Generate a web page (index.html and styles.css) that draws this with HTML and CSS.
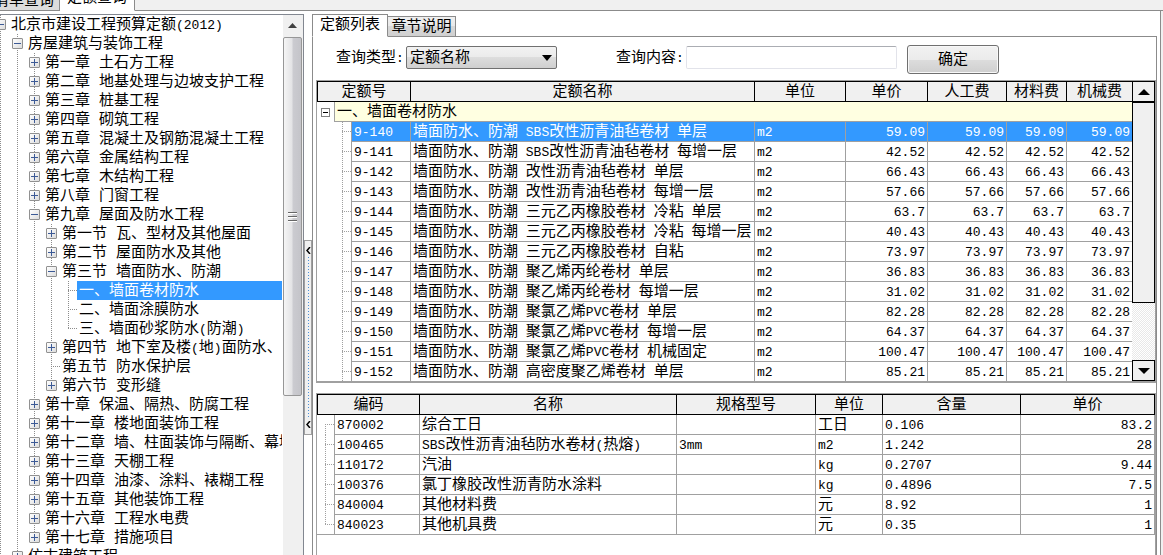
FILE: index.html
```html
<!DOCTYPE html>
<html lang="zh-CN">
<head>
<meta charset="utf-8">
<title>定额查询</title>
<link rel="stylesheet" href="styles.css">
</head>
<body>
<nav class="top-tabs">
  <button class="top-tab">清单查询</button>
  <button class="top-tab current">定额查询</button>
  <span class="top-fill"></span>
</nav>
<main class="page">
  <aside class="tree-pane">
    <div class="tree-view">
      <ul class="tree root">
        <li><div class="row"><button class="toggle open" aria-label="收起"></button><span class="label">北京市建设工程预算定额<span class="en">(2012)</span></span></div>
          <ul class="tree more">
            <li><div class="row"><button class="toggle open" aria-label="收起"></button><span class="label">房屋建筑与装饰工程</span></div>
              <ul class="tree">
                <li><div class="row"><button class="toggle" aria-label="展开"></button><span class="label">第一章 土石方工程</span></div></li>
                <li><div class="row"><button class="toggle" aria-label="展开"></button><span class="label">第二章 地基处理与边坡支护工程</span></div></li>
                <li><div class="row"><button class="toggle" aria-label="展开"></button><span class="label">第三章 桩基工程</span></div></li>
                <li><div class="row"><button class="toggle" aria-label="展开"></button><span class="label">第四章 砌筑工程</span></div></li>
                <li><div class="row"><button class="toggle" aria-label="展开"></button><span class="label">第五章 混凝土及钢筋混凝土工程</span></div></li>
                <li><div class="row"><button class="toggle" aria-label="展开"></button><span class="label">第六章 金属结构工程</span></div></li>
                <li><div class="row"><button class="toggle" aria-label="展开"></button><span class="label">第七章 木结构工程</span></div></li>
                <li><div class="row"><button class="toggle" aria-label="展开"></button><span class="label">第八章 门窗工程</span></div></li>
                <li><div class="row"><button class="toggle open" aria-label="收起"></button><span class="label">第九章 屋面及防水工程</span></div>
                  <ul class="tree">
                    <li><div class="row"><button class="toggle" aria-label="展开"></button><span class="label">第一节 瓦、型材及其他屋面</span></div></li>
                    <li><div class="row"><button class="toggle" aria-label="展开"></button><span class="label">第二节 屋面防水及其他</span></div></li>
                    <li><div class="row"><button class="toggle open" aria-label="收起"></button><span class="label">第三节 墙面防水、防潮</span></div>
                      <ul class="tree">
                        <li><div class="row"><span class="leaf"></span><span class="label selected">一、墙面卷材防水</span></div></li>
                        <li><div class="row"><span class="leaf"></span><span class="label">二、墙面涂膜防水</span></div></li>
                        <li><div class="row"><span class="leaf"></span><span class="label">三、墙面砂浆防水<span class="en">(</span>防潮<span class="en">)</span></span></div></li>
                      </ul>
                    </li>
                    <li><div class="row"><button class="toggle" aria-label="展开"></button><span class="label">第四节 地下室及楼<span class="en">(</span>地<span class="en">)</span>面防水、</span></div></li>
                    <li><div class="row"><span class="leaf"></span><span class="label">第五节 防水保护层</span></div></li>
                    <li><div class="row"><button class="toggle" aria-label="展开"></button><span class="label">第六节 变形缝</span></div></li>
                  </ul>
                </li>
                <li><div class="row"><button class="toggle" aria-label="展开"></button><span class="label">第十章 保温、隔热、防腐工程</span></div></li>
                <li><div class="row"><button class="toggle" aria-label="展开"></button><span class="label">第十一章 楼地面装饰工程</span></div></li>
                <li><div class="row"><button class="toggle" aria-label="展开"></button><span class="label">第十二章 墙、柱面装饰与隔断、幕墙</span></div></li>
                <li><div class="row"><button class="toggle" aria-label="展开"></button><span class="label">第十三章 天棚工程</span></div></li>
                <li><div class="row"><button class="toggle" aria-label="展开"></button><span class="label">第十四章 油漆、涂料、裱糊工程</span></div></li>
                <li><div class="row"><button class="toggle" aria-label="展开"></button><span class="label">第十五章 其他装饰工程</span></div></li>
                <li><div class="row"><button class="toggle" aria-label="展开"></button><span class="label">第十六章 工程水电费</span></div></li>
                <li><div class="row"><button class="toggle" aria-label="展开"></button><span class="label">第十七章 措施项目</span></div></li>
              </ul>
            </li>
            <li><div class="row"><button class="toggle" aria-label="展开"></button><span class="label">仿古建筑工程</span></div></li>
          </ul>
        </li>
      </ul>
    </div>
    <div class="tree-scroll">
      <svg class="scroll-up" width="19" height="22" viewBox="0 0 19 22"><path d="M5 13l4.500-5 4.500 5z" fill="#404040"/></svg>
      <div class="tree-thumb"><svg width="9" height="11" viewBox="0 0 9 11"><path d="M0 1.500h9M0 5.500h9M0 9.500h9" stroke="#666"/><path d="M0 2.500h9M0 6.500h9M0 10.500h9" stroke="#fff"/></svg></div>
    </div>
  </aside>

  <div class="splitter"><button class="grip" aria-label="收起左侧">
    <svg width="5" height="7" viewBox="0 0 5 7"><path d="M4 0L1 3.500 4 7" fill="none" stroke="#000" stroke-width="1.500"/></svg>
    <span class="dots"></span>
    <svg width="5" height="7" viewBox="0 0 5 7"><path d="M4 0L1 3.500 4 7" fill="none" stroke="#000" stroke-width="1.500"/></svg>
  </button></div>

  <section class="content">
    <nav class="tabs">
      <button class="tab current">定额列表</button>
      <button class="tab">章节说明</button>
      <span class="tab-fill"></span>
    </nav>
    <div class="panel">
      <form class="query">
        <label for="kind">查询类型<span class="en">:</span></label>
        <span class="select-box"><select id="kind"><option>定额名称</option></select><svg width="10" height="6" viewBox="0 0 10 6"><path d="M0 0h10L5 6z"/></svg></span>
        <label class="second" for="text">查询内容<span class="en">:</span></label>
        <input id="text" type="text">
        <button class="ok" type="button">确定</button>
      </form>

      <div class="grid-box quota">
        <table class="grid">
          <colgroup><col class="w18"><col class="w17"><col class="w59"><col><col class="w91"><col class="w82"><col class="w79"><col class="w60"><col class="w65"></colgroup>
          <thead><tr><th colspan="3">定额号</th><th>定额名称</th><th>单位</th><th>单价</th><th>人工费</th><th>材料费</th><th>机械费</th></tr></thead>
          <tbody>
            <tr class="group"><td class="gutter"><button class="mini" aria-label="收起"></button></td><td colspan="8">一、墙面卷材防水</td></tr>
            <tr class="picked"><td class="branch" colspan="2"></td><td class="en">9-140</td><td>墙面防水、防潮<span class="en"> SBS</span>改性沥青油毡卷材<span class="en"> </span>单层</td><td class="en">m2</td><td class="num">59.09</td><td class="num">59.09</td><td class="num">59.09</td><td class="num">59.09</td></tr>
            <tr><td class="branch" colspan="2"></td><td class="en">9-141</td><td>墙面防水、防潮<span class="en"> SBS</span>改性沥青油毡卷材<span class="en"> </span>每增一层</td><td class="en">m2</td><td class="num">42.52</td><td class="num">42.52</td><td class="num">42.52</td><td class="num">42.52</td></tr>
            <tr><td class="branch" colspan="2"></td><td class="en">9-142</td><td>墙面防水、防潮<span class="en"> </span>改性沥青油毡卷材<span class="en"> </span>单层</td><td class="en">m2</td><td class="num">66.43</td><td class="num">66.43</td><td class="num">66.43</td><td class="num">66.43</td></tr>
            <tr><td class="branch" colspan="2"></td><td class="en">9-143</td><td>墙面防水、防潮<span class="en"> </span>改性沥青油毡卷材<span class="en"> </span>每增一层</td><td class="en">m2</td><td class="num">57.66</td><td class="num">57.66</td><td class="num">57.66</td><td class="num">57.66</td></tr>
            <tr><td class="branch" colspan="2"></td><td class="en">9-144</td><td>墙面防水、防潮<span class="en"> </span>三元乙丙橡胶卷材<span class="en"> </span>冷粘<span class="en"> </span>单层</td><td class="en">m2</td><td class="num">63.7</td><td class="num">63.7</td><td class="num">63.7</td><td class="num">63.7</td></tr>
            <tr><td class="branch" colspan="2"></td><td class="en">9-145</td><td>墙面防水、防潮<span class="en"> </span>三元乙丙橡胶卷材<span class="en"> </span>冷粘<span class="en"> </span>每增一层</td><td class="en">m2</td><td class="num">40.43</td><td class="num">40.43</td><td class="num">40.43</td><td class="num">40.43</td></tr>
            <tr><td class="branch" colspan="2"></td><td class="en">9-146</td><td>墙面防水、防潮<span class="en"> </span>三元乙丙橡胶卷材<span class="en"> </span>自粘</td><td class="en">m2</td><td class="num">73.97</td><td class="num">73.97</td><td class="num">73.97</td><td class="num">73.97</td></tr>
            <tr><td class="branch" colspan="2"></td><td class="en">9-147</td><td>墙面防水、防潮<span class="en"> </span>聚乙烯丙纶卷材<span class="en"> </span>单层</td><td class="en">m2</td><td class="num">36.83</td><td class="num">36.83</td><td class="num">36.83</td><td class="num">36.83</td></tr>
            <tr><td class="branch" colspan="2"></td><td class="en">9-148</td><td>墙面防水、防潮<span class="en"> </span>聚乙烯丙纶卷材<span class="en"> </span>每增一层</td><td class="en">m2</td><td class="num">31.02</td><td class="num">31.02</td><td class="num">31.02</td><td class="num">31.02</td></tr>
            <tr><td class="branch" colspan="2"></td><td class="en">9-149</td><td>墙面防水、防潮<span class="en"> </span>聚氯乙烯<span class="en">PVC</span>卷材<span class="en"> </span>单层</td><td class="en">m2</td><td class="num">82.28</td><td class="num">82.28</td><td class="num">82.28</td><td class="num">82.28</td></tr>
            <tr><td class="branch" colspan="2"></td><td class="en">9-150</td><td>墙面防水、防潮<span class="en"> </span>聚氯乙烯<span class="en">PVC</span>卷材<span class="en"> </span>每增一层</td><td class="en">m2</td><td class="num">64.37</td><td class="num">64.37</td><td class="num">64.37</td><td class="num">64.37</td></tr>
            <tr><td class="branch" colspan="2"></td><td class="en">9-151</td><td>墙面防水、防潮<span class="en"> </span>聚氯乙烯<span class="en">PVC</span>卷材<span class="en"> </span>机械固定</td><td class="en">m2</td><td class="num">100.47</td><td class="num">100.47</td><td class="num">100.47</td><td class="num">100.47</td></tr>
            <tr><td class="branch" colspan="2"></td><td class="en">9-152</td><td>墙面防水、防潮<span class="en"> </span>高密度聚乙烯卷材<span class="en"> </span>单层</td><td class="en">m2</td><td class="num">85.21</td><td class="num">85.21</td><td class="num">85.21</td><td class="num">85.21</td></tr>
          </tbody>
        </table>
        <div class="grid-scroll">
          <button class="arrow" aria-label="向上"><svg width="12" height="6" viewBox="0 0 12 6"><path d="M0 6L6 0l6 6z"/></svg></button>
          <div class="thumb"></div>
          <div class="track"></div>
          <button class="arrow" aria-label="向下"><svg width="12" height="6" viewBox="0 0 12 6"><path d="M0 0h12L6 6z"/></svg></button>
        </div>
      </div>

      <div class="grid-box detail">
        <table class="grid">
          <colgroup><col class="w18"><col class="w85"><col><col class="w139"><col class="w67"><col class="w138"><col class="w134"></colgroup>
          <thead><tr><th colspan="2">编码</th><th>名称</th><th>规格型号</th><th>单位</th><th>含量</th><th>单价</th></tr></thead>
          <tbody>
            <tr><td class="link first"></td><td class="en">870002</td><td>综合工日</td><td></td><td>工日</td><td class="en">0.106</td><td class="num">83.2</td></tr>
            <tr><td class="link"></td><td class="en">100465</td><td><span class="en">SBS</span>改性沥青油毡防水卷材<span class="en">(</span>热熔<span class="en">)</span></td><td class="en">3mm</td><td class="en">m2</td><td class="en">1.242</td><td class="num">28</td></tr>
            <tr><td class="link"></td><td class="en">110172</td><td>汽油</td><td></td><td class="en">kg</td><td class="en">0.2707</td><td class="num">9.44</td></tr>
            <tr><td class="link"></td><td class="en">100376</td><td>氯丁橡胶改性沥青防水涂料</td><td></td><td class="en">kg</td><td class="en">0.4896</td><td class="num">7.5</td></tr>
            <tr><td class="link"></td><td class="en">840004</td><td>其他材料费</td><td></td><td>元</td><td class="en">8.92</td><td class="num">1</td></tr>
            <tr><td class="link last"></td><td class="en">840023</td><td>其他机具费</td><td></td><td>元</td><td class="en">0.35</td><td class="num">1</td></tr>
          </tbody>
        </table>
      </div>
    </div>
  </section>
</main>
</body>
</html>
```

FILE: styles.css
```css
* { box-sizing: border-box; }
body {
  margin: 0;
  height: 100vh;
  overflow: hidden;
  display: flex;
  flex-direction: column;
  background: #f0f0f0;
  color: #000;
  font: 15px/19px "Liberation Mono", "Noto Sans CJK SC", monospace;
}
button, select, input { font: inherit; color: inherit; margin: 0; padding: 0; border-radius: 0; }
svg { display: block; flex: none; }
.en, .num { font-size: 13px; white-space: pre; }

/* outer tabs */
.top-tabs { display: flex; align-items: flex-end; height: 11px; flex: none; overflow: hidden; }
.top-tab {
  width: 75px; height: 24px; flex: none;
  border: 1px solid #8b8b8b; border-top: 0; border-left: 0;
  background: #dcdcdc; line-height: 15px; padding-top: 5px;
}
.top-tab:first-child { margin-left: -15px; padding-left: 4px; }
.top-tab.current { background: #fff; border-bottom-color: #fff; padding-top: 0; }
.top-fill { flex: 1; height: 1px; background: #8b8b8b; }

.page {
  flex: 1; min-height: 0; display: flex;
  margin-right: 2px; padding: 3px 3px 0 0;
  background: #fff; border-right: 1px solid #8b8b8b;
}

/* tree */
.tree-pane {
  width: 304px; flex: none; display: flex; overflow: hidden;
  border-top: 1px solid #828790; border-right: 1px solid #828790;
}
.tree-view { flex: 1; min-width: 0; overflow: hidden; }
.tree {
  list-style: none; margin: 0 0 0 17px; padding: 0;
  background: repeating-linear-gradient(#8c8c8c 0 1px, transparent 1px 2px) 8px 0 / 1px calc(100% - 9px) no-repeat;
}
.tree.root { margin-left: -8px; background-size: 1px 100%; }
.tree.more { background-size: 1px 100%; }
.row { display: flex; height: 19px; }
.label { flex: 1; min-width: 0; padding-left: 2px; line-height: 21px; margin-right: 1px; white-space: nowrap; overflow: hidden; }
.label.selected { background: #3399ff; color: #fff; }
.toggle {
  width: 11px; height: 11px; flex: none; margin: 4px 3px;
  border: 1px solid #919191; border-radius: 1px;
  background:
    linear-gradient(#3c5a96, #3c5a96) center / 7px 1px no-repeat,
    linear-gradient(#3c5a96, #3c5a96) center / 1px 7px no-repeat,
    linear-gradient(135deg, #fff, #dcdcdc);
}
.toggle.open {
  background:
    linear-gradient(#3c5a96, #3c5a96) center / 7px 1px no-repeat,
    linear-gradient(135deg, #fff, #dcdcdc);
}
.leaf {
  width: 17px; flex: none;
  background: repeating-linear-gradient(90deg, #8c8c8c 0 1px, transparent 1px 2px) 8px 9px / 9px 1px no-repeat;
}
.tree-scroll { width: 20px; flex: none; background: #f0f0f0; padding-right: 1px; }
.tree-thumb {
  height: 359px; display: flex; align-items: center; justify-content: center;
  border: 1px solid #979797; border-radius: 2px;
  background: linear-gradient(90deg, #f5f5f5, #e4e4e6 45%, #cbcbd0 55%, #c4c4c9);
}

/* splitter */
.splitter { width: 8px; flex: none; padding-top: 226px; }
.grip {
  width: 8px; height: 195px; padding: 6px 0;
  display: flex; flex-direction: column; align-items: center; gap: 3px;
  border: 1px solid #a0a0a0; background: #f0f0f0;
}
.dots { flex: 1; width: 1px; background: repeating-linear-gradient(#4a90d9 0 1px, transparent 1px 3px); }

/* content */
.content { flex: 1; min-width: 0; display: flex; flex-direction: column; }
.tabs { display: flex; align-items: flex-end; height: 23px; flex: none; }
.tab {
  width: 68px; height: 21px; border: 1px solid #8b8b8b; border-left: 0;
  background: linear-gradient(#f0f0f0, #e8e8e8 50%, #d8d8d8 50%, #d0d0d0);
  line-height: 17px; padding-top: 2px;
}
.tab.current { width: 76px; height: 23px; border: 1px solid #8b8b8b; border-bottom-color: #fff; background: #fff; padding-top: 0; }
.tab-fill { flex: 1; height: 1px; background: #8b8b8b; }
.panel {
  flex: 1; min-height: 0; display: flex; flex-direction: column;
  padding: 0 0 0 3px; border: 1px solid #8b8b8b; border-width: 0 1px 0 1px;
}
.query { display: flex; align-items: flex-start; height: 43px; flex: none; padding: 8px 0 0 20px; }
.query label { width: 70px; line-height: 27px; white-space: nowrap; flex: none; }
.query label.second { margin-left: 59px; }
.select-box { position: relative; width: 151px; margin-top: 1px; }
.select-box svg { position: absolute; right: 5px; top: 9px; pointer-events: none; }
.select-box select {
  appearance: none; display: block; width: 100%; height: 23px; padding: 2px 0 0 3px;
  border: 1px solid #707070; border-radius: 2px;
  background: linear-gradient(#f2f2f2, #ebebeb 50%, #dddddd 50%, #cfcfcf);
}
.query input {
  width: 211px; height: 23px; border: 1px solid #e2e3ea; border-top-color: #abadb3;
  border-radius: 2px; background: #fff; margin: 1px 10px 0 0;
}
.ok {
  width: 92px; height: 29px; padding-top: 2px; border: 1px solid #707070; border-radius: 3px;
  background: linear-gradient(#f2f2f2, #ebebeb 50%, #dddddd 50%, #cfcfcf);
  box-shadow: inset 0 0 0 1px #f8f8f8;
}

.grid-box { display: flex; border: 1px solid #a0a0a0; }
.quota { border-bottom-width: 2px; }
.detail { flex: 1; min-height: 0; margin-top: 10px; align-items: flex-start; border-bottom: 0; }
.grid { flex: 1; width: 100%; min-width: 0; table-layout: fixed; border-collapse: separate; border-spacing: 0; }
.grid th, .grid td { height: 20px; line-height: 17px; white-space: nowrap; overflow: hidden; }
.grid th {
  height: 21px; padding: 2px 0 0; font-weight: normal; background: #f0f0f0;
  border: 1px solid #000; border-left-width: 0;
}
.grid th:first-child { border-left-width: 1px; }
.quota th:last-child { border-right: 0; }
.grid td { padding: 2px 2px 0; border: 1px solid #a0a0a0; border-width: 0 1px 1px 0; }
.quota td:last-child { border-right: 0; }
.quota tbody tr:last-child td { border-bottom: 0; height: 19px; }
.grid .num { text-align: right; }
.group td { background: #ffffe1; }
.grid .gutter { background: #fff; border-bottom: 0; padding: 0 4px; vertical-align: middle; }
.mini {
  display: block; width: 9px; height: 9px; border: 1px solid #808080;
  background: linear-gradient(#000, #000) center / 5px 1px no-repeat #fff;
}
.picked td:not(.branch) { background: #3399ff; color: #fff; }
.grid .branch {
  border-bottom: 0;
  background:
    repeating-linear-gradient(#a0a0a0 0 1px, transparent 1px 2px) 25px 0 / 1px 100% no-repeat,
    repeating-linear-gradient(90deg, #a0a0a0 0 1px, transparent 1px 2px) 25px 9px / 9px 1px no-repeat;
}
.grid .link {
  border-bottom: 0;
  background:
    repeating-linear-gradient(#a0a0a0 0 1px, transparent 1px 2px) 8px 0 / 1px 100% no-repeat,
    repeating-linear-gradient(90deg, #a0a0a0 0 1px, transparent 1px 2px) 8px 9px / 9px 1px no-repeat;
}
.grid .link.first { background-position: 8px 9px, 8px 9px; }
.grid .link.last { background-size: 1px 10px, 9px 1px; border-bottom: 1px solid #a0a0a0; }

.grid-scroll { width: 23px; flex: none; display: flex; flex-direction: column; background: #f0f0f0; }
.arrow { height: 21px; display: flex; align-items: center; justify-content: center; border: 1px solid #000; background: #f0f0f0; }
.thumb { height: 201px; border: 1px solid #000; }
.track { flex: 1; background: repeating-conic-gradient(#fff 0 25%, #e8e8e8 0 50%) 0 0 / 2px 2px; }

.w17 { width: 17px; }
.w18 { width: 18px; }
.w59 { width: 59px; }
.w60 { width: 60px; }
.w65 { width: 65px; }
.w67 { width: 67px; }
.w79 { width: 79px; }
.w82 { width: 82px; }
.w85 { width: 85px; }
.w91 { width: 91px; }
.w134 { width: 134px; }
.w138 { width: 138px; }
.w139 { width: 139px; }
```
